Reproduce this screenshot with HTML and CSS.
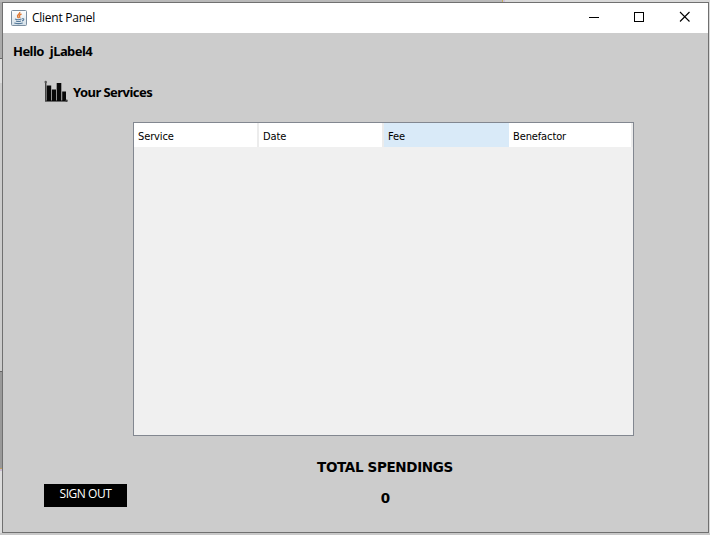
FILE: index.html
```
<!DOCTYPE html>
<html lang="en">
<head>
<meta charset="utf-8">
<title>Client Panel</title>
<link rel="stylesheet" href="styles.css">
</head>
<body>
<main class="window">
  <header class="titlebar">
    <svg class="app-icon" width="16" height="16" viewBox="0 0 16 16">
      <defs><linearGradient id="tile" x2="0" y2="1"><stop stop-color="#fff"/><stop offset="1" stop-color="#d3dfe8"/></linearGradient></defs>
      <rect x=".5" y=".5" width="15" height="15" rx="1" fill="url(#tile)" stroke="#7b8ea0"/>
      <path d="M8.700 2c.8 2-3.300 2.800-2 5l1 1M10.500 4c-2.300 1-2.700 2-1.400 3.800" fill="none" stroke="#e07a35" stroke-width="1.400"/>
      <path d="M4 9c1.600.8 5 .6 6.500 0M5 11c1.500.7 3.600.6 5 0M3.300 13c2.200.7 6.200.7 8.400 0M11 8.800c2.600-.5 2.200 1.700 0 2.100" fill="none" stroke="#55799a" stroke-width="1.100"/>
    </svg>
    <h1 class="title">Client Panel</h1>
    <div class="controls">
      <svg width="10" height="11" viewBox="0 0 10 11"><path d="M0 6.500h10" stroke="#000"/></svg>
      <svg width="10" height="11" viewBox="0 0 10 11"><rect x=".5" y="1.500" width="9" height="9" fill="none" stroke="#000"/></svg>
      <svg width="11" height="11" viewBox="0 0 11 11"><path d="M1 1l9.500 9.500M10.500 1L1 10.500" stroke="#000" stroke-width="1.100"/></svg>
    </div>
  </header>
  <section class="content">
    <div class="greeting"><span class="hello">Hello</span><span class="user">jLabel4</span></div>
    <div class="services">
      <svg width="24" height="22" viewBox="0 0 24 22">
        <path d="M1.700 2v19H23" fill="none" stroke="#444" stroke-width="1.400"/>
        <path d="M2.700 5.500h4.500V21H2.700zM7.900 9.500H12V21H7.900zM12.700 3h4.600v18h-4.600zM18.200 11.500H22V21h-3.800z" fill="#080808"/>
        <circle cx="1.700" cy="2" r="1.200" fill="#555"/><circle cx="22.600" cy="20.700" r="1.200" fill="#444"/>
      </svg>
      <h2 class="services-title">Your Services</h2>
    </div>
    <div class="table">
      <div class="row">
        <div class="cell"><span class="service">Service</span></div>
        <div class="cell"><span class="date">Date</span></div>
        <div class="cell active"><span class="fee">Fee</span></div>
        <div class="cell"><span class="benefactor">Benefactor</span></div>
      </div>
    </div>
    <footer class="footer">
      <button class="sign-out">SIGN OUT</button>
      <div class="totals"><div class="total-label">TOTAL SPENDINGS</div><div class="total">0</div></div>
    </footer>
  </section>
</main>
</body>
</html>
```
FILE: styles.css
```
* { box-sizing: border-box; }
body {
  margin: 0;
  width: 710px;
  height: 535px;
  padding: 2px 1px 2px 2px;
  overflow: hidden;
  color: #000;
  background:
    linear-gradient(#b9b9b9, #b9b9b9) 0 0 / 502px 2px no-repeat,
    linear-gradient(#c4ae58, #c4ae58) 502px 0 / 1px 2px no-repeat,
    linear-gradient(#cdbfda, #cdbfda) 503px 0 / 2px 2px no-repeat,
    linear-gradient(#d9d9d9, #d9d9d9) 505px 0 / 205px 2px no-repeat,
    linear-gradient(#c8c8c8, #c8c8c8) 0 533px / 710px 2px no-repeat,
    linear-gradient(#d8d8d8, #d8d8d8) 709px 0 / 1px 535px no-repeat,
    linear-gradient(#aaa 0 58px, #666 58px 59px, #ddd 59px 83px, #ccc 83px 371px, #666 371px 372px, #999 372px 468px, #c0a15a 468px 469px, #c8b9d0 469px 471px, #ddd 471px);
}
.window {
  width: 707px;
  height: 531px;
  border: 1px solid #707070;
  background: #ccc;
  display: flex;
  flex-direction: column;
}
.titlebar {
  height: 30px;
  background: #fff;
  display: flex;
  align-items: center;
  padding: 0 18px 0 8px;
}
.app-icon { margin-right: 5px; }
.title { margin: 0; font: 12px/16px "Open Sans", sans-serif; letter-spacing: -.25px; }
.controls { margin-left: auto; display: flex; gap: 35px; margin-top: -4px; }
.controls svg { display: block; }
.content { flex: 1; display: flex; flex-direction: column; }
.greeting {
  display: flex;
  gap: 6px;
  padding: 8px 0 0 10px;
  font: bold 13px/20px "Noto Sans", sans-serif;
  letter-spacing: -.55px;
}
.services { display: flex; align-items: center; height: 22px; margin: 19px 0 0 41px; }
.services-title { margin: 2px 0 0 5px; font: bold 13px/20px "Noto Sans", sans-serif; letter-spacing: -.55px; }
.table {
  width: 501px;
  height: 314px;
  margin: 20px 0 0 130px;
  border: 1px solid #828790;
  background: #f0f0f0;
}
.row { display: grid; grid-template-columns: 125px 125px 125px 124px; height: 24px; }
.cell {
  background: #fff;
  border-right: 2px solid #ececec;
  padding: 3px 0 0 4px;
  font: 11px/21px "DejaVu Sans Condensed", "DejaVu Sans", sans-serif;
  letter-spacing: -.12px;
}
.active { background: #d9eaf8; border-color: #d9eaf8; }
.footer { display: flex; padding-left: 41px; }
.sign-out {
  width: 83px;
  height: 23px;
  margin-top: 48px;
  padding: 0 0 4px;
  border: 0;
  background: #000;
  color: #fff;
  font: 12px/16px "Open Sans", sans-serif;
  letter-spacing: -.45px;
}
.totals {
  width: 180px;
  margin: 21px 0 0 168px;
  text-align: center;
  font: bold 13.5px/20px "DejaVu Sans", sans-serif;
}
.total-label { letter-spacing: -.35px; white-space: nowrap; }
.total { margin-top: 11px; padding-left: 1px; }
```
